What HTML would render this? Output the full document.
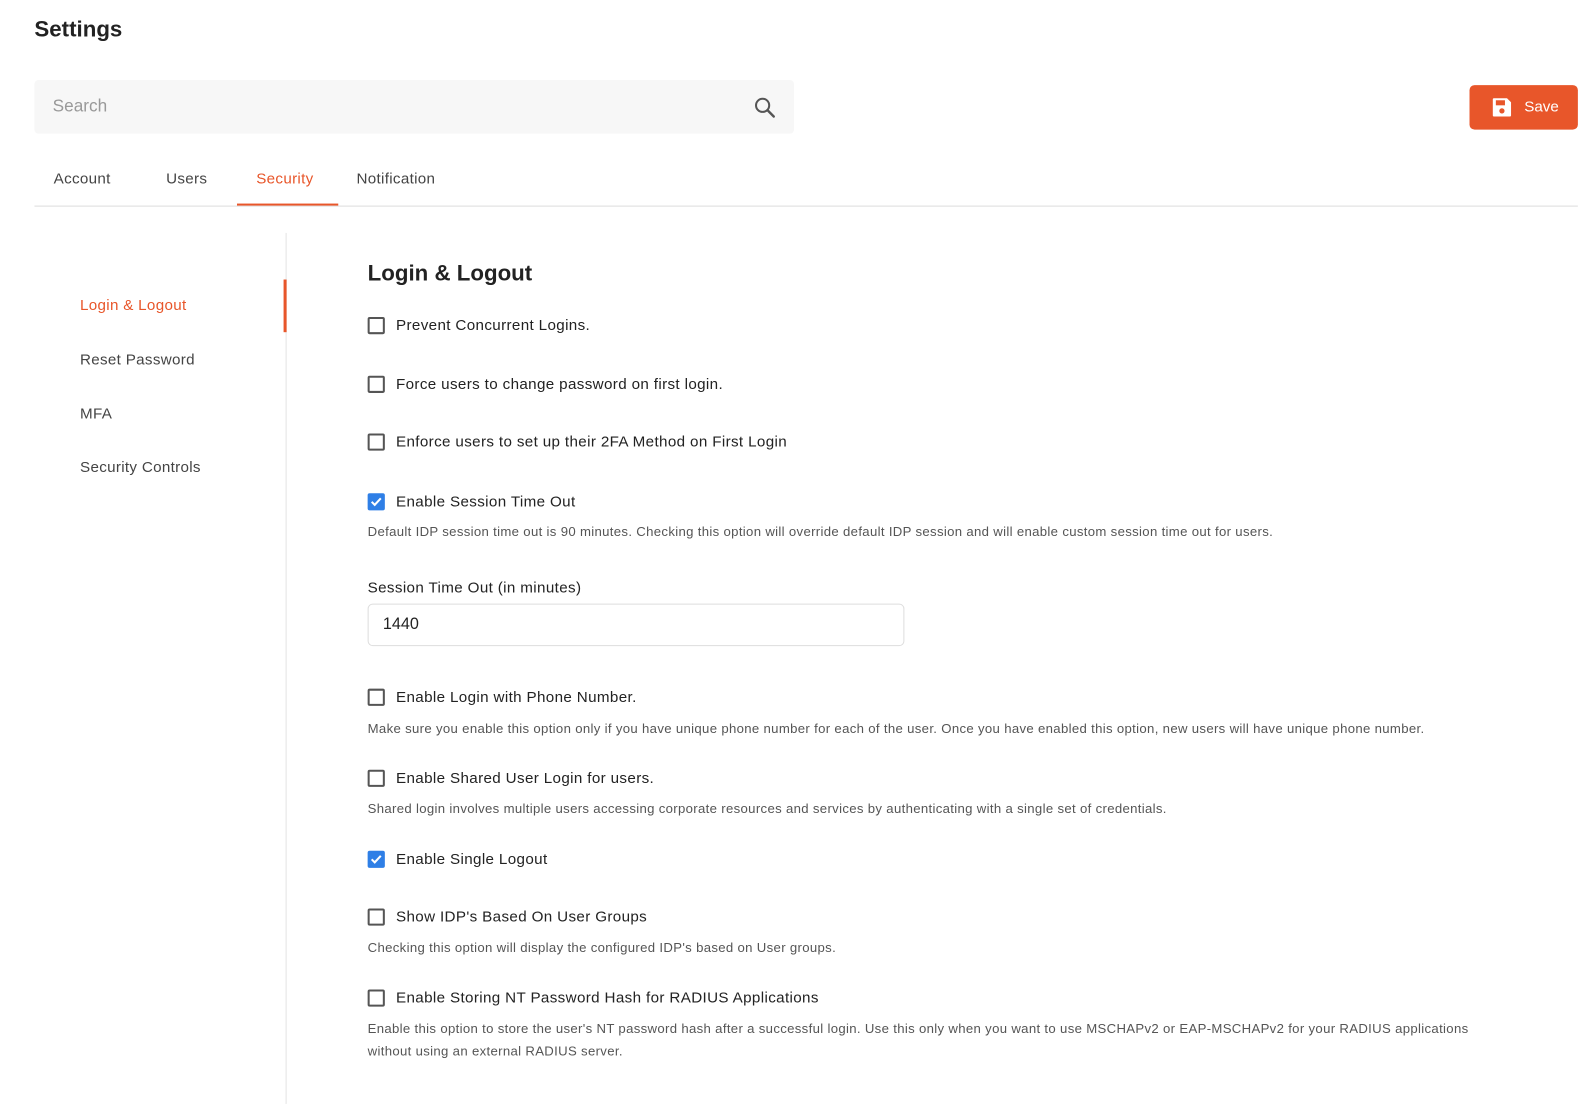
<!DOCTYPE html>
<html><head><meta charset="utf-8"><style>
*{margin:0;padding:0;box-sizing:border-box}
body{width:1588px;height:1095px;background:#fff;font-family:"Liberation Sans",sans-serif;color:#222;position:relative;overflow:hidden}
#w{position:absolute;left:0;top:0;width:1568px;height:1082px;transform:scale(1.01276);transform-origin:0 0}
.a{position:absolute;white-space:nowrap}
.cb{position:absolute;left:363px;width:17px;height:17px;border:2px solid #555;border-radius:2px;background:#fff}
.cb.on{background:#2f7fe6;border-color:#2f7fe6}
.lbl{position:absolute;left:391px;font-size:15px;letter-spacing:0.35px;color:#222;line-height:20px;white-space:nowrap;margin-top:1px}
.desc{position:absolute;left:363px;font-size:13px;letter-spacing:0.32px;color:#555;line-height:22px;white-space:nowrap}
.tab{position:absolute;top:167px;font-size:15px;color:#444;line-height:20px;letter-spacing:.3px}
.side{position:absolute;left:79px;font-size:15px;color:#444;letter-spacing:.3px;line-height:20px;margin-top:1px}
</style></head><body><div id="w">
<div class="a" style="left:34px;top:16px;font-size:22px;font-weight:bold;color:#222">Settings</div>
<div class="a" style="left:34px;top:79px;width:750px;height:53px;background:#f7f7f7;border-radius:4px"></div>
<div class="a" style="left:52px;top:94px;font-size:17px;color:#999;line-height:22px">Search</div>
<svg class="a" style="left:744px;top:95px" width="22" height="22" viewBox="0 0 22 22"><circle cx="9" cy="9" r="6.5" fill="none" stroke="#555" stroke-width="2"/><path d="M14 14l6 6" stroke="#555" stroke-width="2.4" stroke-linecap="round"/></svg>
<div class="a" style="left:1451px;top:84px;width:107px;height:44px;background:#e8562a;border-radius:5px"></div>
<svg class="a" style="left:1472px;top:95px" width="22" height="22" viewBox="0 0 22 22"><path d="M2 3a1 1 0 0 1 1-1h13l4 4v13a1 1 0 0 1-1 1H3a1 1 0 0 1-1-1z" fill="#fff"/><rect x="5" y="4" width="9" height="5" fill="#e8562a"/><circle cx="11" cy="14.5" r="2.6" fill="#e8562a"/></svg>
<div class="a" style="left:1505px;top:96px;font-size:15px;color:#fff;line-height:20px">Save</div>
<div class="tab" style="left:53px">Account</div>
<div class="tab" style="left:164px">Users</div>
<div class="tab" style="left:253px;color:#e8562a">Security</div>
<div class="tab" style="left:352px">Notification</div>
<div class="a" style="left:34px;top:203px;width:1524px;height:1px;background:#ddd"></div>
<div class="a" style="left:234px;top:201px;width:100px;height:2px;background:#e8562a"></div>
<div class="a" style="left:282px;top:230px;width:1px;height:860px;background:#e3e3e3"></div>
<div class="a" style="left:280px;top:276px;width:3px;height:52px;background:#e8562a"></div>
<div class="side" style="top:291px;color:#e8562a">Login &amp; Logout</div>
<div class="side" style="top:345px">Reset Password</div>
<div class="side" style="top:398px">MFA</div>
<div class="side" style="top:451px">Security Controls</div>
<div class="a" style="left:363px;top:256px;font-size:22px;font-weight:bold;color:#222;line-height:28px">Login &amp; Logout</div>

<div class="cb" style="top:313px"></div><div class="lbl" style="top:311px">Prevent Concurrent Logins.</div>
<div class="cb" style="top:371px"></div><div class="lbl" style="top:369px">Force users to change password on first login.</div>
<div class="cb" style="top:428px"></div><div class="lbl" style="top:426px">Enforce users to set up their 2FA Method on First Login</div>
<div class="cb on" style="top:487px"><svg width="13" height="13" viewBox="0 0 13 13" style="position:absolute;left:0;top:0"><path d="M2 6.5l3 3 6-6.5" fill="none" stroke="#fff" stroke-width="2"/></svg></div><div class="lbl" style="top:485px">Enable Session Time Out</div>
<div class="desc" style="top:514px">Default IDP session time out is 90 minutes. Checking this option will override default IDP session and will enable custom session time out for users.</div>
<div class="lbl" style="left:363px;top:570px">Session Time Out (in minutes)</div>
<div class="a" style="left:363px;top:596px;width:530px;height:42px;border:1px solid #ddd;border-radius:5px"></div>
<div class="a" style="left:378px;top:607px;font-size:16px;color:#222;line-height:20px">1440</div>
<div class="cb" style="top:680px"></div><div class="lbl" style="top:678px">Enable Login with Phone Number.</div>
<div class="desc" style="top:709px">Make sure you enable this option only if you have unique phone number for each of the user. Once you have enabled this option, new users will have unique phone number.</div>
<div class="cb" style="top:760px"></div><div class="lbl" style="top:758px">Enable Shared User Login for users.</div>
<div class="desc" style="top:788px">Shared login involves multiple users accessing corporate resources and services by authenticating with a single set of credentials.</div>
<div class="cb on" style="top:840px"><svg width="13" height="13" viewBox="0 0 13 13" style="position:absolute;left:0;top:0"><path d="M2 6.5l3 3 6-6.5" fill="none" stroke="#fff" stroke-width="2"/></svg></div><div class="lbl" style="top:838px">Enable Single Logout</div>
<div class="cb" style="top:897px"></div><div class="lbl" style="top:895px">Show IDP's Based On User Groups</div>
<div class="desc" style="top:925px">Checking this option will display the configured IDP's based on User groups.</div>
<div class="cb" style="top:977px"></div><div class="lbl" style="top:975px">Enable Storing NT Password Hash for RADIUS Applications</div>
<div class="desc" style="top:1005px">Enable this option to store the user's NT password hash after a successful login. Use this only when you want to use MSCHAPv2 or EAP-MSCHAPv2 for your RADIUS applications</div>
<div class="desc" style="top:1027px">without using an external RADIUS server.</div>
</div></body></html>
